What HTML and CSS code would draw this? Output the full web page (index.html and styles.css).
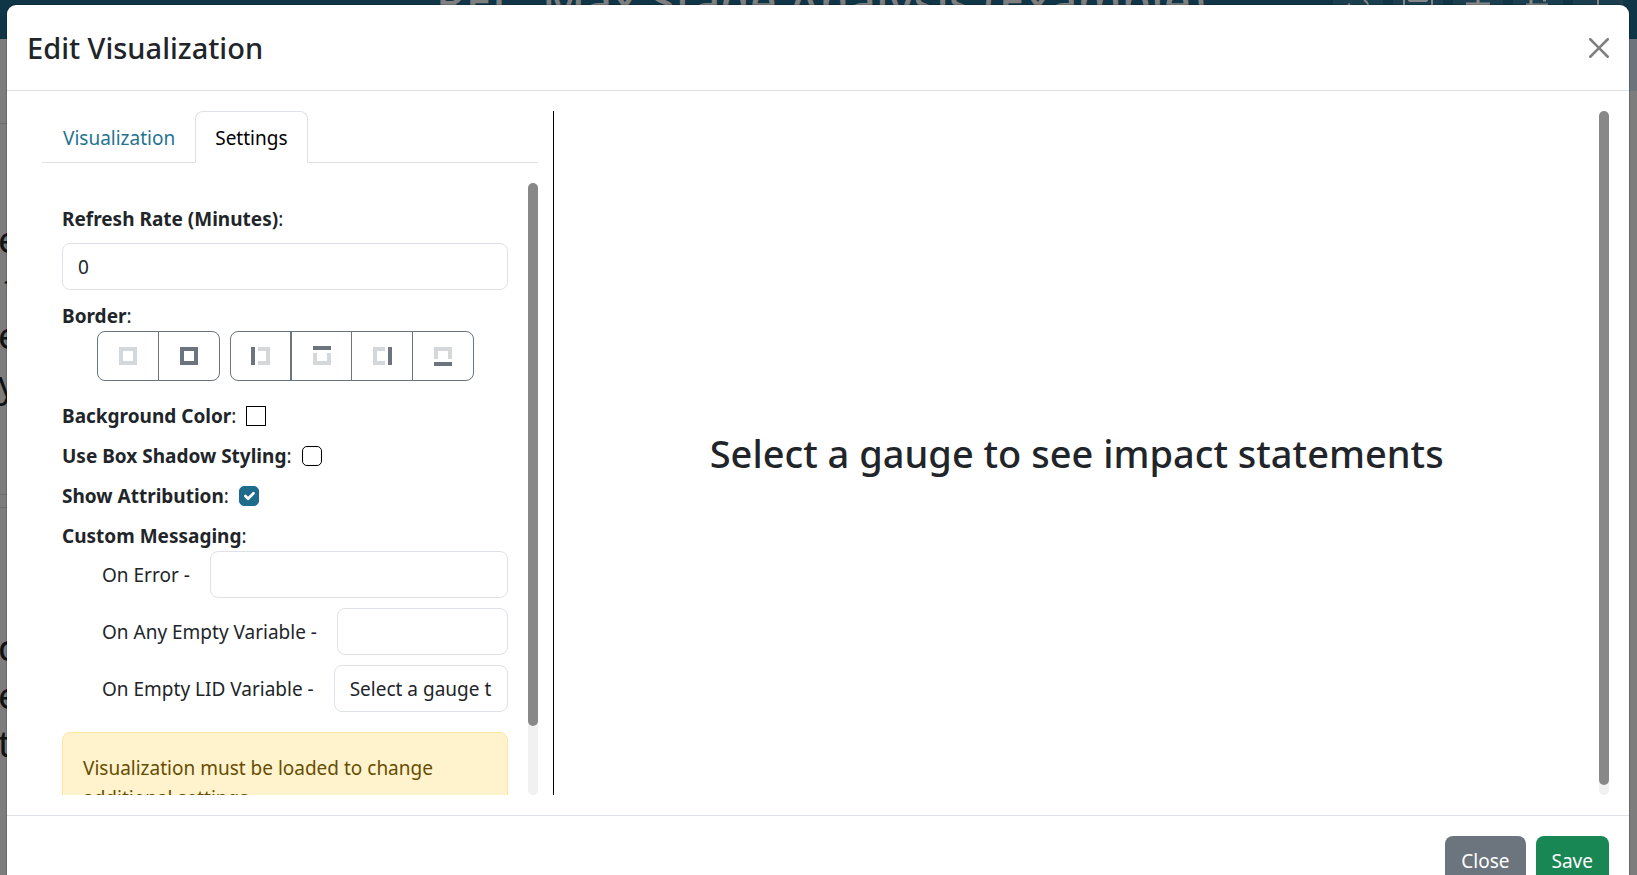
FILE: index.html
```html
<!DOCTYPE html>
<html lang="en">
	<head>
		<meta charset="utf-8">
		<title>Edit Visualization</title>
		<link rel="stylesheet" href="styles.css">
	</head>
	<body>

		<!-- dashboard behind the modal -->
		<div class="dashboard" aria-hidden="true">
			<div class="dashboard-header">
				<span class="dashboard-title">REL. Max Stage Analysis (Example)</span>
				<div class="dashboard-tools">
					<span class="tool"><svg width="30" height="5" viewBox="0 0 30 5"><path d="M5 5l2-1M21 0q4 2 4 5" fill="none" stroke="#878787" stroke-width="2"/></svg></span>
					<span class="tool"><svg width="30" height="5" viewBox="0 0 30 5"><path d="M1 0v5M29 0v5M6 0q0 1 2 1h14q2 0 2-1" fill="none" stroke="#878787" stroke-width="2"/></svg></span>
					<span class="tool"><svg width="30" height="5" viewBox="0 0 30 5"><path d="M15 0v4M3 4h24" fill="none" stroke="#878787" stroke-width="3"/></svg></span>
					<span class="tool"><svg width="30" height="5" viewBox="0 0 30 5"><path d="M8 0v4M3 5h22M20 0h3" fill="none" stroke="#878787" stroke-width="3"/></svg></span>
					<span class="tool"><svg width="30" height="5" viewBox="0 0 30 5"><path d="M15 0v5" fill="none" stroke="#878787" stroke-width="2"/></svg></span>
				</div>
			</div>
			<div class="dashboard-toolbar"></div>
			<div class="dashboard-card">
				<p>e</p>
				<p class="indent">t</p>
				<p>e</p>
				<p>y</p>
			</div>
			<div class="dashboard-card">
				<p>c</p>
				<p>e</p>
				<p>t</p>
			</div>
		</div>

		<div class="modal" role="dialog" aria-labelledby="modal-title">
			<div class="modal-header">
				<h1 class="modal-title" id="modal-title">Edit Visualization</h1>
				<button type="button" class="btn-close" aria-label="Close">
					<svg width="20" height="20" viewBox="0 0 16 16"><path d="M.293.293a1 1 0 0 1 1.414 0L8 6.586 14.293.293a1 1 0 1 1 1.414 1.414L9.414 8l6.293 6.293a1 1 0 0 1-1.414 1.414L8 9.414l-6.293 6.293a1 1 0 0 1-1.414-1.414L6.586 8 .293 1.707a1 1 0 0 1 0-1.414z"/></svg>
				</button>
			</div>

			<div class="modal-body">
				<div class="col-settings">
					<div class="nav-tabs">
						<a class="nav-link" href="#visualization">Visualization</a>
						<a class="nav-link active" href="#settings">Settings</a>
					</div>

					<div class="tab-pane" id="settings">
						<div class="tab-scroll">
							<label class="form-label" for="refresh"><b>Refresh Rate (Minutes)</b>:</label>
							<input class="form-control" id="refresh" type="text" value="0">

							<div class="border-label"><b>Border</b>:</div>
							<div class="border-buttons">
								<div class="btn-group">
									<button type="button" aria-label="No border"><svg width="18" height="18" viewBox="0 0 18 18"><path class="light" d="M2 2h14v14H2z"/></svg></button>
									<button type="button" aria-label="All borders"><svg width="18" height="18" viewBox="0 0 18 18"><path class="dark" d="M2 2h14v14H2z"/></svg></button>
								</div>
								<div class="btn-group">
									<button type="button" class="thick" aria-label="Left border"><svg width="20" height="18" viewBox="0 0 20 18"><path class="dark" d="M2 0v18"/><path class="light" d="M7 2h10v14H7"/></svg></button>
									<button type="button" aria-label="Top border"><svg width="18" height="20" viewBox="0 0 18 20"><path class="dark" d="M0 2h18"/><path class="light" d="M2 7v10h14V7"/></svg></button>
									<button type="button" aria-label="Right border"><svg width="20" height="18" viewBox="0 0 20 18"><path class="dark" d="M18 0v18"/><path class="light" d="M13 2H3v14h10"/></svg></button>
									<button type="button" aria-label="Bottom border"><svg width="18" height="20" viewBox="0 0 18 20"><path class="dark" d="M0 18h18"/><path class="light" d="M2 13V3h14v10"/></svg></button>
								</div>
							</div>

							<div class="setting-row">
								<span><b>Background Color</b>:</span>
								<button type="button" class="color-swatch" aria-label="Background Color"></button>
							</div>
							<div class="setting-row">
								<label for="shadow"><b>Use Box Shadow Styling</b>:</label>
								<input class="form-check" id="shadow" type="checkbox">
							</div>
							<div class="setting-row">
								<label for="attribution"><b>Show Attribution</b>:</label>
								<input class="form-check" id="attribution" type="checkbox" checked>
							</div>

							<div class="messaging-label"><b>Custom Messaging</b>:</div>
							<div class="messaging">
								<div class="message-row">
									<label for="on-error">On Error -</label>
									<input class="form-control" id="on-error" type="text">
								</div>
								<div class="message-row">
									<label for="on-empty">On Any Empty Variable -</label>
									<input class="form-control" id="on-empty" type="text">
								</div>
								<div class="message-row">
									<label for="on-lid">On Empty LID Variable -</label>
									<input class="form-control" id="on-lid" type="text" value="Select a gauge to see impact statements">
								</div>
							</div>

							<div class="alert">Visualization must be loaded to change additional settings.</div>
						</div>
						<div class="scrollbar"><div class="scrollbar-thumb" style="height: 88.7%"></div></div>
					</div>
				</div>

				<div class="col-preview">
					<div class="preview">
						<h2>Select a gauge to see impact statements</h2>
					</div>
					<div class="scrollbar"><div class="scrollbar-thumb" style="height: 98.5%"></div></div>
				</div>
			</div>

			<div class="modal-footer">
				<button type="button" class="btn btn-secondary">Close</button>
				<button type="button" class="btn btn-success">Save</button>
			</div>
		</div>

	</body>
</html>
```
FILE: styles.css
```css
*{
	box-sizing: border-box;
}
body{
	margin: 0;
	height: 100vh;
	overflow: hidden;
	font-family: "Segoe UI", "Noto Sans", sans-serif;
	font-size: 19px;
	line-height: 30px;
	color: #212529;
	background: #7d7d7d;
}
h1, h2, p{
	margin: 0;
	font-weight: 500;
}
button, input{
	font: inherit;
	color: inherit;
}

/* dashboard */
.dashboard{
	position: absolute;
	top: 0;
	left: 0;
	width: 100%;
	height: 100%;
	overflow: hidden;
}
.dashboard-header{
	position: relative;
	height: 39px;
	background: #0f3547;
}
.dashboard-title{
	position: absolute;
	top: -29px;
	left: 436px;
	font-size: 47px;
	line-height: 60px;
	font-weight: 500;
	color: #7f7f7f;
	white-space: nowrap;
}
.dashboard-tools{
	position: absolute;
	top: 0;
	right: 14px;
	display: flex;
	gap: 10px;
}
.tool{
	width: 50px;
	height: 24px;
	padding: 0 10px;
	background: #1b3f4e;
}
.tool svg{
	display: block;
}
.dashboard-toolbar{
	height: 52px;
	background: linear-gradient(90deg, #7d7d7d 50%, #6c737b 50%);
}
.dashboard-card{
	width: 50%;
	height: 372px;
	margin-top: 32px;
	padding-top: 91px;
	border: 1px solid #6d6d6d;
	border-left: 0;
	font-size: 37px;
	line-height: 48px;
	color: #101214;
}
.dashboard-card + .dashboard-card{
	margin-top: 12px;
	padding-top: 115px;
}
.dashboard-card p{
	margin-left: -2px;
	font-weight: 400;
}
.dashboard-card .indent{
	margin-left: 4px;
}

/* modal */
.modal{
	position: relative;
	margin: 5px 8px 0 7px;
	background: #fff;
	border-radius: 9px 9px 0 0;
	box-shadow: 0 0 0 1px rgba(0, 0, 0, .15);
}
.modal-header{
	display: flex;
	align-items: center;
	justify-content: space-between;
	height: 86px;
	padding: 0 20px;
	border-bottom: 1px solid #dee2e6;
}
.modal-title{
	font-size: 29px;
	line-height: 45px;
}
.btn-close{
	display: block;
	padding: 0;
	border: 0;
	background: none;
	opacity: .5;
}
.btn-close svg{
	display: block;
}
.modal-body{
	display: flex;
	height: calc(100vh - 151px);
	min-height: 300px;
	padding: 20px;
}

/* settings column */
.col-settings{
	display: flex;
	flex-direction: column;
	flex: 0 0 33.3333%;
	min-width: 0;
	padding: 0 15px;
	border-right: 1px solid #000;
}
.nav-tabs{
	display: flex;
	border-bottom: 1px solid #dee2e6;
}
.nav-link{
	padding: 11px 19px 9px;
	margin-bottom: -1px;
	border: 1px solid transparent;
	border-radius: 8px 8px 0 0;
	color: #267391;
	text-decoration: none;
}
.nav-link:first-child{
	padding-left: 20px;
}
.nav-link.active{
	color: #000;
	background: #fff;
	border-color: #dee2e6 #dee2e6 #fff;
}
.tab-pane{
	display: flex;
	flex: 1;
	min-height: 0;
	margin-top: 20px;
}
.tab-scroll{
	flex: 1;
	min-width: 0;
	padding: 21px 20px 20px;
	overflow-y: auto;
	scrollbar-width: none;
}
.scrollbar{
	flex: none;
	width: 10px;
	border-radius: 5px;
	background: #f1f1f1;
}
.scrollbar-thumb{
	border-radius: 5px;
	background: #888;
}
.form-label{
	display: block;
	margin-bottom: 9px;
}
.form-control{
	display: block;
	width: 100%;
	height: 47px;
	padding: 7px 15px;
	border: 1px solid #dee2e6;
	border-radius: 8px;
	background: #fff;
}
.border-label{
	margin-top: 11px;
}
.border-buttons{
	display: flex;
	gap: 10px;
	padding-left: 35px;
	margin-bottom: 20px;
}
.btn-group{
	display: flex;
	border: 1px solid #6c757d;
	border-radius: 8px;
}
.btn-group button{
	display: flex;
	align-items: center;
	justify-content: center;
	width: 61px;
	height: 48px;
	padding: 0;
	border: 0;
	border-right: 1px solid #6c757d;
	background: none;
}
.btn-group button:last-child, .btn-group .thick + button{
	width: 60px;
}
.btn-group button:last-child{
	border-right: 0;
}
.btn-group .thick{
	border-right-width: 2px;
}
.btn-group path{
	fill: none;
	stroke-width: 4;
}
.light{
	stroke: #d5d8da;
}
.dark{
	stroke: #6c757d;
}
.setting-row{
	display: flex;
	align-items: center;
	gap: 10px;
	margin-bottom: 10px;
}
.color-swatch{
	width: 20px;
	height: 20px;
	padding: 0;
	border: 1px solid #000;
	background: #fff;
}
.form-check{
	appearance: none;
	width: 20px;
	height: 20px;
	margin: 0;
	border: 1px solid #000;
	border-radius: 5px;
	background: #fff;
}
.form-check:checked{
	border-color: #1f6b8b;
	background: #1f6b8b url("data:image/svg+xml,%3csvg xmlns='http://www.w3.org/2000/svg' viewBox='0 0 20 20'%3e%3cpath fill='none' stroke='%23fff' stroke-linecap='round' stroke-linejoin='round' stroke-width='3' d='m6 10 3 3 6-6'/%3e%3c/svg%3e") center / 18px;
}
.messaging{
	padding-left: 40px;
}
.message-row{
	display: flex;
	align-items: center;
	gap: 20px;
	margin-bottom: 10px;
}
.message-row label{
	flex: none;
}
.message-row .form-control{
	flex: 1;
	min-width: 0;
}
.alert{
	margin-top: 20px;
	padding: 20px;
	border: 1px solid #ffe69c;
	border-radius: 8px;
	color: #664d03;
	background: #fff3cd;
}

/* preview column */
.col-preview{
	display: flex;
	flex: 1;
	min-width: 0;
}
.preview{
	display: flex;
	flex: 1;
	align-items: center;
	justify-content: center;
	min-width: 0;
}
.preview h2{
	font-size: 38px;
	line-height: 48px;
	text-align: center;
}

.modal-footer{
	display: flex;
	justify-content: flex-end;
	gap: 10px;
	padding: 20px;
	border-top: 1px solid #dee2e6;
}
.btn{
	height: 50px;
	padding: 0 16px;
	border: 0;
	border-radius: 8px;
	color: #fff;
}
.btn-secondary{
	background: #6c757d;
}
.btn-success{
	background: #198754;
}
```
